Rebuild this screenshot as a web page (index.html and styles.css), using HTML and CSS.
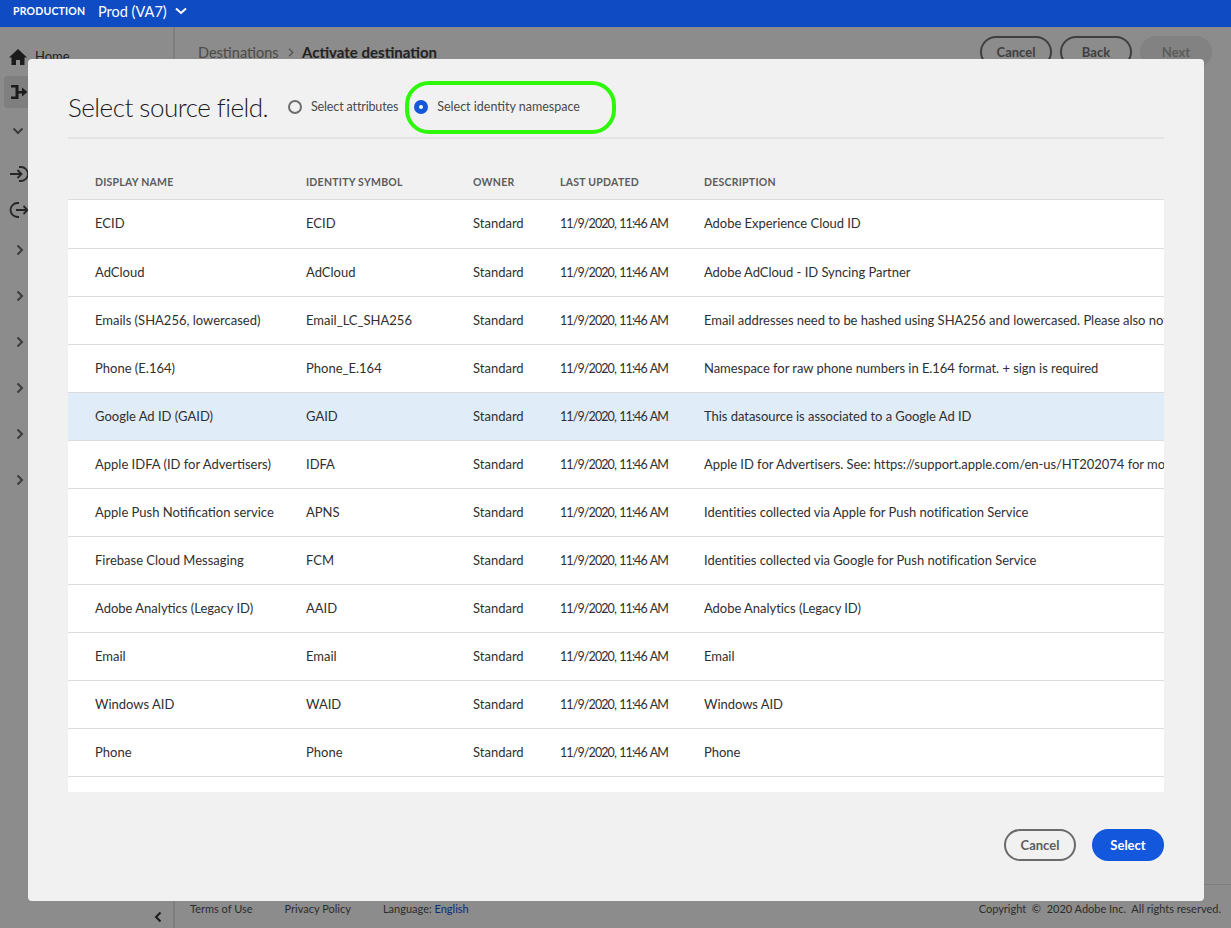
FILE: index.html
```html
<!DOCTYPE html>
<html lang="en">
<head>
<meta charset="utf-8">
<title>Activate destination</title>
<link rel="stylesheet" href="styles.css">
</head>
<body>
<header class="topbar">
  <span class="env">PRODUCTION</span>
  <span class="org">Prod (VA7)</span>
  <svg class="org-chev" width="12" height="8" viewBox="0 0 12 8"><path d="M1 1.500 6 6l5-4.500" fill="none" stroke="#fff" stroke-width="2"/></svg>
</header>
<div class="shell">
  <aside class="side">
    <div class="side-item home">
      <svg width="20" height="18" viewBox="0 0 20 18"><path d="M10 1 1 9.500h2.500V17H8v-5h4v5h4.500V9.500H19z" fill="#1c1c1c"/></svg>
      <span>Home</span>
    </div>
    <div class="side-item active">
      <svg width="18" height="16" viewBox="0 0 18 16"><path d="M1 1h7.500v6H12V3.500L17.500 8 12 12.500V9.500H8.500V15H1V12.500h4.500v-9H1z" fill="#1c1c1c"/></svg>
    </div>
    <div class="side-item chev"><svg width="12" height="8" viewBox="0 0 12 8"><path d="M1.500 1.500 6 6l4.500-4.500" fill="none" stroke="#3c3c3c" stroke-width="2"/></svg></div>
    <div class="side-item io">
      <svg width="20" height="18" viewBox="0 0 20 18"><path d="M10 2h2a7 7 0 0 1 0 14h-2M1 9h11M8.500 5l4 4-4 4" fill="none" stroke="#262626" stroke-width="1.800"/></svg>
    </div>
    <div class="side-item io">
      <svg width="20" height="18" viewBox="0 0 20 18"><path d="M10 2H8.500a7 7 0 0 0 0 14H10M7 9h11M14.500 5l4 4-4 4" fill="none" stroke="#262626" stroke-width="1.800"/></svg>
    </div>
    <div class="side-item more"><svg width="8" height="12" viewBox="0 0 8 12"><path d="M1.500 1.500 6 6l-4.500 4.500" fill="none" stroke="#3c3c3c" stroke-width="2"/></svg></div>
    <div class="side-item more"><svg width="8" height="12" viewBox="0 0 8 12"><path d="M1.500 1.500 6 6l-4.500 4.500" fill="none" stroke="#3c3c3c" stroke-width="2"/></svg></div>
    <div class="side-item more"><svg width="8" height="12" viewBox="0 0 8 12"><path d="M1.500 1.500 6 6l-4.500 4.500" fill="none" stroke="#3c3c3c" stroke-width="2"/></svg></div>
    <div class="side-item more"><svg width="8" height="12" viewBox="0 0 8 12"><path d="M1.500 1.500 6 6l-4.500 4.500" fill="none" stroke="#3c3c3c" stroke-width="2"/></svg></div>
    <div class="side-item more"><svg width="8" height="12" viewBox="0 0 8 12"><path d="M1.500 1.500 6 6l-4.500 4.500" fill="none" stroke="#3c3c3c" stroke-width="2"/></svg></div>
    <div class="side-item more"><svg width="8" height="12" viewBox="0 0 8 12"><path d="M1.500 1.500 6 6l-4.500 4.500" fill="none" stroke="#3c3c3c" stroke-width="2"/></svg></div>
    <div class="collapse"><svg width="8" height="12" viewBox="0 0 8 12"><path d="M6.500 1.500 2 6l4.500 4.500" fill="none" stroke="#1c1c1c" stroke-width="2"/></svg></div>
  </aside>
  <main class="main">
    <div class="page-head">
      <div class="crumbs">
        <span class="crumb">Destinations</span>
        <svg class="crumb-sep" width="6" height="9" viewBox="0 0 6 9"><path d="M1 .8 4.800 4.500 1 8.200" fill="none" stroke="#555" stroke-width="1.300"/></svg>
        <strong>Activate destination</strong>
      </div>
      <div class="head-btns">
        <span class="ghost">Cancel</span>
        <span class="ghost">Back</span>
        <span class="ghost disabled">Next</span>
      </div>
    </div>
    <div class="page-body"></div>
    <footer class="foot">
      <span>Terms of Use</span>
      <span>Privacy Policy</span>
      <span>Language: <a class="lang">English</a></span>
      <span class="copy">Copyright &nbsp;©&nbsp; 2020 Adobe Inc.&nbsp; All rights reserved.</span>
    </footer>
  </main>
</div>

<section class="modal">
  <div class="modal-head">
    <h1>Select source field.</h1>
    <label class="radio"><span class="dot"></span>Select attributes</label>
    <label class="radio on"><span class="dot"></span>Select identity namespace</label>
  </div>
  <div class="tbl">
    <div class="row th"><span>DISPLAY NAME</span><span>IDENTITY SYMBOL</span><span>OWNER</span><span>LAST UPDATED</span><span>DESCRIPTION</span></div>
    <div class="row first"><span>ECID</span><span>ECID</span><span>Standard</span><span>11/9/2020, 11:46 AM</span><span>Adobe Experience Cloud ID</span></div>
    <div class="row"><span>AdCloud</span><span>AdCloud</span><span>Standard</span><span>11/9/2020, 11:46 AM</span><span>Adobe AdCloud - ID Syncing Partner</span></div>
    <div class="row"><span>Emails (SHA256, lowercased)</span><span>Email_LC_SHA256</span><span>Standard</span><span>11/9/2020, 11:46 AM</span><span>Email addresses need to be hashed using SHA256 and lowercased. Please also note that there are</span></div>
    <div class="row"><span>Phone (E.164)</span><span>Phone_E.164</span><span>Standard</span><span>11/9/2020, 11:46 AM</span><span>Namespace for raw phone numbers in E.164 format. + sign is required</span></div>
    <div class="row sel"><span>Google Ad ID (GAID)</span><span>GAID</span><span>Standard</span><span>11/9/2020, 11:46 AM</span><span>This datasource is associated to a Google Ad ID</span></div>
    <div class="row"><span>Apple IDFA (ID for Advertisers)</span><span>IDFA</span><span>Standard</span><span>11/9/2020, 11:46 AM</span><span>Apple ID for Advertisers. See: https://support.apple.com/en-us/HT202074 for more information</span></div>
    <div class="row"><span>Apple Push Notification service</span><span>APNS</span><span>Standard</span><span>11/9/2020, 11:46 AM</span><span>Identities collected via Apple for Push notification Service</span></div>
    <div class="row"><span>Firebase Cloud Messaging</span><span>FCM</span><span>Standard</span><span>11/9/2020, 11:46 AM</span><span>Identities collected via Google for Push notification Service</span></div>
    <div class="row"><span>Adobe Analytics (Legacy ID)</span><span>AAID</span><span>Standard</span><span>11/9/2020, 11:46 AM</span><span>Adobe Analytics (Legacy ID)</span></div>
    <div class="row"><span>Email</span><span>Email</span><span>Standard</span><span>11/9/2020, 11:46 AM</span><span>Email</span></div>
    <div class="row"><span>Windows AID</span><span>WAID</span><span>Standard</span><span>11/9/2020, 11:46 AM</span><span>Windows AID</span></div>
    <div class="row"><span>Phone</span><span>Phone</span><span>Standard</span><span>11/9/2020, 11:46 AM</span><span>Phone</span></div>
    <div class="tail"></div>
  </div>
  <div class="modal-foot">
    <button class="btn-outline">Cancel</button>
    <button class="btn-primary">Select</button>
  </div>
</section>
<div class="callout"></div>
</body>
</html>
```
FILE: styles.css
```css
* { box-sizing: border-box; }
html, body { margin: 0; height: 100%; }
body {
  width: 1231px;
  height: 928px;
  overflow: hidden;
  position: relative;
  background: #8c8c8c;
  font-family: "Lato", "Liberation Sans", sans-serif;
  font-size: 13px;
  color: #2c2c2c;
  display: flex;
  flex-direction: column;
}
.topbar {
  height: 27px;
  flex: none;
  background: #0f4cc4;
  color: #fff;
  display: flex;
  align-items: center;
  padding: 0 0 5px 13px;
}
.env { font-size: 10.500px; font-weight: 700; letter-spacing: .2px; width: 85px; }
.org { font-size: 14.500px; width: 77px; }
.shell { flex: 1; display: flex; min-height: 0; }
.side {
  width: 175px;
  flex: none;
  border-right: 2px solid #7e7e7e;
  padding-top: 12px;
  position: relative;
}
.side-item { display: flex; align-items: center; justify-content: center; width: 28px; margin-left: 4px; }
.home { height: 37px; width: auto; align-items: flex-start; justify-content: flex-start; gap: 7px; margin-left: 8px; padding-top: 9px; font-size: 13px; color: #222; }
.active { height: 32px; background: #7f7f7f; border-radius: 4px 0 0 4px; padding-left: 2px; }
.chev { height: 46px; margin-bottom: 2px; }
.io { height: 36px; padding-left: 2px; }
.more { height: 46px; padding-left: 4px; }
.io + .more { margin-top: -1px; }
.collapse { position: absolute; right: 11px; bottom: 5px; line-height: 0; }
.main { flex: 1; display: flex; flex-direction: column; min-width: 0; }
.page-head {
  height: 58px;
  flex: none;
  display: flex;
  justify-content: space-between;
  align-items: flex-start;
  padding: 9px 19px 0 23px;
}
.crumbs { font-size: 15px; display: flex; align-items: center; height: 32px; color: #4a4a4a; }
.crumb { font-size: 14.500px; width: 90px; }
.crumb-sep { margin-right: 8px; }
.crumbs strong { color: #222; }
.head-btns { display: flex; gap: 8px; }
.ghost {
  width: 72px;
  height: 32px;
  border: 2px solid #3f3f3f;
  border-radius: 16px;
  font-size: 13px;
  font-weight: 700;
  display: flex;
  align-items: center;
  justify-content: center;
  color: #3f3f3f;
}
.ghost.disabled { border-color: #828282; background: #828282; color: #5c5c5c; }
.page-body { flex: 1; }
.foot {
  height: 44px;
  flex: none;
  display: flex;
  gap: 32px;
  padding: 17px 10px 0 15px;
  font-size: 11px;
  color: #2c2c2c;
  border-top: 1px solid #7e7e7e;
}
.lang { color: #10297a; }
.copy { margin-left: auto; }

.modal {
  position: absolute;
  left: 28px;
  top: 59px;
  width: 1176px;
  height: 842px;
  background: #f1f1f1;
  border-radius: 4px;
  padding: 0 40px;
  display: flex;
  flex-direction: column;
}
.modal-head {
  height: 80px;
  flex: none;
  display: flex;
  align-items: center;
  padding-top: 17px;
  border-bottom: 2px solid #e4e4e4;
}
.modal-head h1 {
  margin: 1px 19px 0 0;
  width: 201px;
  white-space: nowrap;
  font-size: 26px;
  letter-spacing: -.5px;
  font-weight: 300;
  color: #1a1a1a;
}
.radio { display: flex; align-items: center; gap: 9px; font-size: 12.500px; letter-spacing: -.14px; color: #4a4a4a; margin-right: 16px; }
.radio.on { letter-spacing: 0; }
.dot { width: 14px; height: 14px; border-radius: 50%; border: 2px solid #6e6e6e; background: #f1f1f1; flex: none; }
.radio.on .dot { border: 5px solid #1357dc; background: #fff; }
.tbl { flex: none; }
.row {
  display: grid;
  grid-template-columns: 211px 167px 87px 144px 460px;
  height: 48px;
  align-items: center;
  padding: 0 0 2px 27px;
  background: #fff;
  border-bottom: 1px solid #dcdcdc;
  white-space: nowrap;
  font-size: 13px;
  color: #2f2f2f;
}
.row.first { height: 49px; }
.row > span { overflow: hidden; }
.row > span:nth-child(4) { font-size: 12.500px; letter-spacing: -.9px; word-spacing: 1px; padding-top: 2px; }
.row > span:nth-child(5) { letter-spacing: -.04px; }
.row.first > span:nth-child(4) { padding-top: 0; }
.row.th {
  height: 61px;
  padding: 25px 0 0 27px;
  background: transparent;
  font-size: 10.500px;
  font-weight: 700;
  color: #5c5c5c;
}
.row.th > span { letter-spacing: .25px; word-spacing: 0; padding-top: 0; font-size: 10.500px; }
.row.sel { background: #e1ecf9; }
.tail { height: 15px; background: #fff; }
.modal-foot {
  flex: 1;
  display: flex;
  justify-content: flex-end;
  align-items: flex-start;
  gap: 16px;
  padding-top: 37px;
}
.modal-foot button {
  width: 72px;
  height: 32px;
  border-radius: 16px;
  font: 700 13px "Lato", "Liberation Sans", sans-serif;
}
.btn-outline { background: transparent; border: 2px solid #6a6a6a; color: #5c5c5c; }
.btn-primary { background: #1357dc; border: 0; color: #fff; }
.callout {
  position: absolute;
  left: 405px;
  top: 81px;
  width: 211px;
  height: 53px;
  border: 4px solid #2ef80a;
  border-radius: 24px;
}
```
